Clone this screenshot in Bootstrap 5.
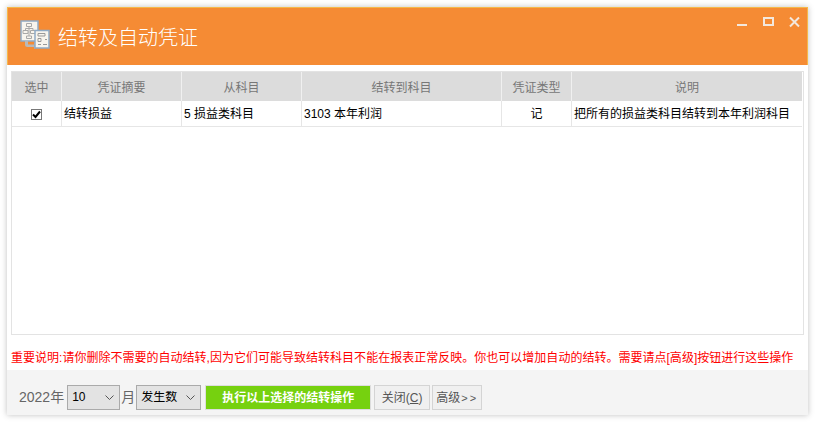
<!DOCTYPE html>
<html lang="zh">
<head>
<meta charset="utf-8">
<title>结转及自动凭证</title>
<link href="https://cdn.jsdelivr.net/npm/bootstrap@5.3.0/dist/css/bootstrap.min.css" rel="stylesheet">
<style>
html,body{height:100%;background:#fff;overflow:hidden}
body{padding:7px 8px 8px 7px;font-family:"Liberation Sans","Noto Sans CJK SC",sans-serif;font-size:12px;color:#000}
.win{width:801px;height:408px;box-shadow:0 0 6px rgba(0,0,0,.25);background:#fff}
.win-head{height:58px;background:#f58b34;border:1px solid #f5b84a;border-bottom:0;color:#fff;padding:0 12px}
.win-logo{margin-top:-5px;flex:none}
.win-title{font-size:20px;line-height:1;margin-left:8px;margin-top:1px;font-family:"Noto Sans CJK SC",sans-serif;font-weight:300}
.ctl{gap:14px;top:8px;right:7px}
.main{padding:6px 4px 0 4px}
.grid-box{height:264px;border:1px solid #e3e3e3;background:#fff}
.grid-tb{table-layout:fixed;width:790px;margin:0;border-collapse:separate;border-spacing:0}
.grid-tb th{height:29px;background:#dcdcdc;color:#777;font-weight:400;text-align:center;font-size:12px;border-right:1px solid #f0f0f0;padding:0;vertical-align:middle;font-family:"Noto Sans CJK SC",sans-serif}
.grid-tb td{height:26px;border-right:1px solid #e6e6e6;border-bottom:1px solid #e6e6e6;padding:0 2px;font-size:12px;vertical-align:middle;white-space:nowrap;overflow:hidden;background:#fff;color:#000}
.grid-tb th:last-child,.grid-tb td:last-child{border-right:0}
.chk{width:11px;height:11px;border:1px solid #777;display:inline-flex;vertical-align:middle;background:#fff}
.notice{color:#f00;font-size:12px;height:35px;line-height:20px;padding-top:13px;white-space:nowrap;letter-spacing:.015px}
.foot{height:45px;background:#f4f4f4;padding:15px 0 0 12px;color:#666;font-size:14px;line-height:25px}
.year{margin-right:3px}
.month{margin:0 1px 0 1px}
.sel{height:25px;border:1px solid #aaa;border-radius:0;background-color:#e3e3e3;font-size:12px;line-height:1;color:#000;padding:0 0 2px 4px;background-image:url("data:image/svg+xml,%3csvg xmlns='http://www.w3.org/2000/svg' viewBox='0 0 9 5'%3e%3cpath fill='none' stroke='%23555' d='M.5.5l4 4 4-4'/%3e%3c/svg%3e");background-position:right 5px center;background-size:9px 5px}
.sel-a{width:53px}
.sel-b{width:65px}
.go{width:166px;height:25px;border:1px solid #ddd;border-radius:0;background:#76d10f;color:#fff;font-size:12px;font-weight:700;padding:0;margin:0 3px 0 4px;line-height:1}
.plain{height:25px;border:1px solid #d4d4d4;border-radius:0;background:#f0f0f0;color:#555;font-size:12px;padding:0;line-height:1}
.plain-a{width:56px;margin-right:2px}
.plain-b{width:50px}
.arrows{font-size:11px;letter-spacing:2px;margin-left:1px}
</style>
</head>
<body>
<div class="win d-flex flex-column">
  <div class="win-head d-flex align-items-center position-relative">
    <svg class="win-logo" width="30" height="29" viewBox="0 0 30 29">
      <rect x="1" y="1" width="17" height="20" fill="#f8f5ee" stroke="#8fabc6" stroke-width="1.500"/>
      <path d="M6.500 3.500h5v3h-5zM3 10.500h5v3H3zM10.500 10.500h5v3h-5zM6.500 16h5v2.500h-5zM9 6.500V16M5.500 10.500V8.500h7.500v2" fill="none" stroke="#a8a8a8"/>
      <path d="M5 21h3v3.500h6V22l4.500 3.500L14 29v-2H7.500A2.500 2.500 0 0 1 5 24.500z" fill="#b9b9b9"/>
      <rect x="15" y="10.500" width="14" height="17.500" fill="#f8f5ee" stroke="#8fabc6" stroke-width="1.500"/>
      <path d="M18 13.500h7v2.500h-7zM18 18.500h3v3h-3zM18 24.500h3M23 24.500h4M25 19.500h2" fill="none" stroke="#999"/>
    </svg>
    <div class="win-title">结转及自动凭证</div>
    <div class="ctl d-flex align-items-start position-absolute">
      <svg width="12" height="12" viewBox="0 0 12 12"><rect x="1" y="8" width="10" height="2" fill="#f3e8dd"/></svg>
      <svg width="12" height="12" viewBox="0 0 12 12"><rect x="2" y="2" width="9" height="7" fill="none" stroke="#f3e8dd" stroke-width="2"/></svg>
      <svg width="12" height="12" viewBox="0 0 12 12"><path d="M2 1.500l9 9M11 1.500l-9 9" stroke="#f3e8dd" stroke-width="2"/></svg>
    </div>
  </div>
  <div class="main">
    <div class="grid-box">
      <table class="grid-tb">
        <colgroup><col style="width:50px"><col style="width:120px"><col style="width:120px"><col style="width:200px"><col style="width:70px"><col style="width:230px"></colgroup>
        <thead><tr><th>选中</th><th>凭证摘要</th><th>从科目</th><th>结转到科目</th><th>凭证类型</th><th>说明</th></tr></thead>
        <tbody><tr>
          <td class="text-center"><span class="chk align-items-center justify-content-center"><svg width="9" height="9" viewBox="0 0 9 9"><path d="M1 4.500l2.500 2.500L8 1.500" fill="none" stroke="#000" stroke-width="2"/></svg></span></td>
          <td>结转损益</td><td>5 损益类科目</td><td>3103 本年利润</td><td class="text-center">记</td><td>把所有的损益类科目结转到本年利润科目</td>
        </tr></tbody>
      </table>
    </div>
    <div class="notice">重要说明:请你删除不需要的自动结转,因为它们可能导致结转科目不能在报表正常反映。你也可以增加自动的结转。需要请点[高级]按钮进行这些操作</div>
  </div>
  <div class="foot d-flex align-items-start">
    <span class="year">2022年</span>
    <select class="form-select sel sel-a"><option>10</option></select>
    <span class="month">月</span>
    <select class="form-select sel sel-b"><option>发生数</option></select>
    <button class="btn go">执行以上选择的结转操作</button>
    <button class="btn plain plain-a">关闭(<u>C</u>)</button>
    <button class="btn plain plain-b">高级<span class="arrows">&gt;&gt;</span></button>
  </div>
</div>
</body>
</html>
